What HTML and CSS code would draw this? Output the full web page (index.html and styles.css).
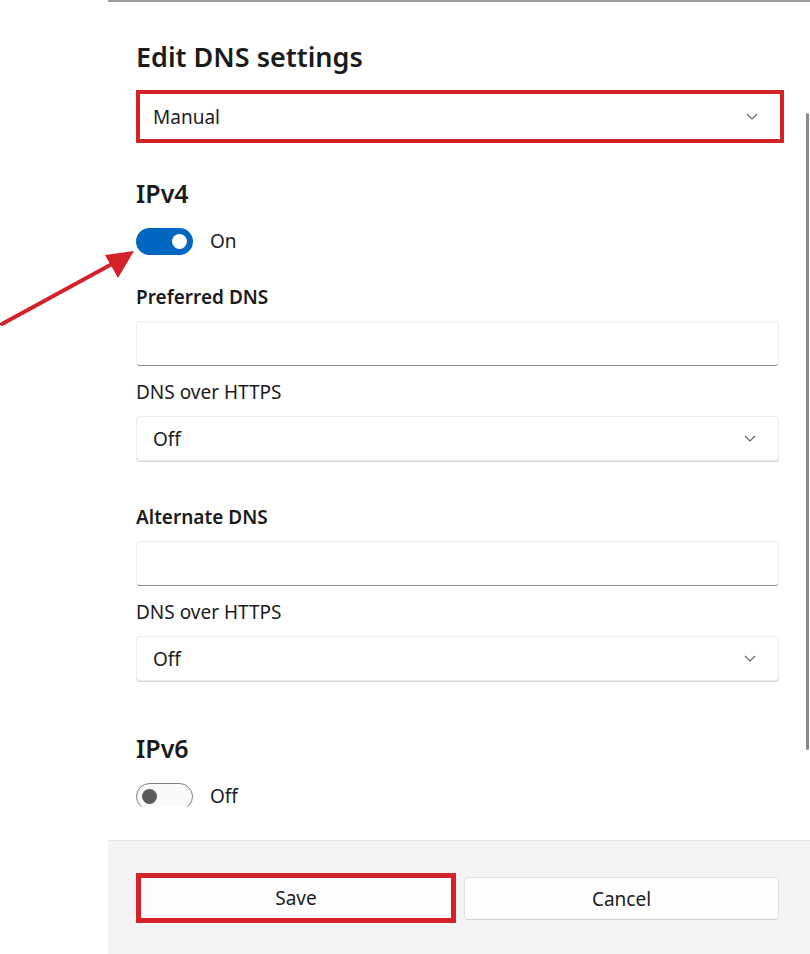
FILE: index.html
```html
<!DOCTYPE html>
<html lang="en">
<head>
    <meta charset="UTF-8">
    <meta name="viewport" content="width=device-width, initial-scale=1.0">
    <title>Edit DNS settings</title>
    <link rel="stylesheet" href="styles.css">
</head>
<body>
    <!-- Annotation arrow pointing at the IPv4 toggle -->
    <svg class="arrow" width="140" height="90" viewBox="0 0 140 90">
        <line x1="2" y1="84" x2="112" y2="24" stroke="#d3222a" stroke-width="4" stroke-linecap="round"/>
        <polygon points="134,11 105,15 118,38" fill="#d3222a"/>
    </svg>

    <div class="dialog">
        <div class="content">
            <div class="main">
                <h1 class="title">Edit DNS settings</h1>

                <div class="highlight">
                    <div class="select">
                        <span>Manual</span>
                        <svg class="chevron" width="12" height="7" viewBox="0 0 12 7"><path d="M1 1l5 5 5-5" fill="none" stroke="#5f5f5f" stroke-width="1.1"/></svg>
                    </div>
                </div>

                <!-- IPv4 -->
                <h2 class="section">IPv4</h2>
                <div class="toggle-row">
                    <span class="toggle on"><span class="knob"></span></span>
                    <span class="toggle-label">On</span>
                </div>

                <div class="field">
                    <div class="label strong">Preferred DNS</div>
                    <div class="textbox"></div>
                </div>
                <div class="field">
                    <div class="label">DNS over HTTPS</div>
                    <div class="select">
                        <span>Off</span>
                        <svg class="chevron" width="12" height="7" viewBox="0 0 12 7"><path d="M1 1l5 5 5-5" fill="none" stroke="#5f5f5f" stroke-width="1.1"/></svg>
                    </div>
                </div>

                <div class="field spaced">
                    <div class="label strong">Alternate DNS</div>
                    <div class="textbox"></div>
                </div>
                <div class="field">
                    <div class="label">DNS over HTTPS</div>
                    <div class="select">
                        <span>Off</span>
                        <svg class="chevron" width="12" height="7" viewBox="0 0 12 7"><path d="M1 1l5 5 5-5" fill="none" stroke="#5f5f5f" stroke-width="1.1"/></svg>
                    </div>
                </div>

                <!-- IPv6 (scrolled, bottom edge cut by the pane) -->
                <h2 class="section section-v6">IPv6</h2>
                <div class="toggle-row">
                    <span class="toggle off"><span class="knob"></span></span>
                    <span class="toggle-label">Off</span>
                </div>
            </div>
            <div class="scrollbar"><div class="thumb"></div></div>
        </div>

        <div class="footer">
            <div class="btn-frame">
                <button class="btn save">Save</button>
            </div>
            <button class="btn cancel">Cancel</button>
        </div>
    </div>
</body>
</html>
```

FILE: styles.css
```css
/* Page */
body {
    margin: 0;
    background: #fff;
    font-family: 'Noto Sans', 'Open Sans', sans-serif;
    color: #1b1b1b;
}

.arrow {
    position: absolute;
    left: 0;
    top: 240px;
}

/* Dialog shell */
.dialog {
    margin-left: 108px;
    width: 702px;
    height: 954px;
    border-top: 2px solid #9c9c9c;
    box-sizing: border-box;
    display: flex;
    flex-direction: column;
}

.content {
    display: flex;
    height: 838px;
}

.main {
    flex: 1;
    padding: 0 27px 0 28px;
}

.scrollbar {
    width: 4px;
    padding-top: 111px;
}

.thumb {
    width: 3px;
    height: 637px;
    background: #8a8a8a;
    border-radius: 2px;
}

/* Headings */
.title {
    margin: 38px 0 0;
    font-size: 27px;
    line-height: 34px;
    font-weight: 600;
}

.section {
    margin: 34px 0 0;
    font-size: 25px;
    line-height: 32px;
    font-weight: 600;
}

.section-v6 {
    margin-top: 51px;
}

/* Red highlight frame */
.highlight {
    margin: 16px -5px 0 0;
    border: 4px solid #d3222a;
}

.highlight .select {
    border: none;
    border-radius: 0;
    box-shadow: none;
    padding-left: 13px;
}

/* Form controls */
.select, .textbox {
    height: 45px;
    box-sizing: border-box;
    border: 1px solid #ececec;
    border-radius: 4px;
    background: #fff;
}

.select {
    display: flex;
    align-items: center;
    justify-content: space-between;
    padding: 0 22px 0 16px;
    font-size: 19px;
    box-shadow: 0 1px 0 #d6d6d6;
}

.textbox {
    border-bottom: 1px solid #8c8c8c;
}

.chevron {
    display: block;
}

.field {
    margin-top: 31px;
}

.field + .field {
    margin-top: 15px;
}

.field + .field.spaced {
    margin-top: 45px;
}

.label {
    font-size: 19px;
    line-height: 22px;
    margin-bottom: 13px;
}

.label.strong {
    font-weight: 600;
}

/* Toggle switches */
.toggle-row {
    display: flex;
    align-items: center;
    gap: 17px;
    margin-top: 18px;
    height: 28px;
}

.toggle {
    width: 57px;
    height: 27px;
    box-sizing: border-box;
    border-radius: 14px;
    display: flex;
    align-items: center;
}

.toggle.on {
    background: #0067c0;
    justify-content: flex-end;
    padding-right: 6px;
}

.toggle.off {
    border: 1.5px solid #7a7a7a;
    background: #fafafa;
    padding-left: 5px;
    clip-path: inset(-2px -2px 3px -2px);
}

.knob {
    width: 15px;
    height: 15px;
    border-radius: 50%;
}

.toggle.on .knob {
    background: #fff;
}

.toggle.off .knob {
    background: #5c5c5c;
}

.toggle-label {
    font-size: 19px;
    line-height: 22px;
}

/* Footer */
.footer {
    flex: 1;
    background: #f3f3f3;
    border-top: 1px solid #e6e6e6;
    display: flex;
    align-items: flex-start;
    gap: 8px;
    padding: 32px 0 0 28px;
}

.btn {
    font-family: inherit;
    font-size: 19px;
    color: #1b1b1b;
    background: #fdfdfd;
    border: 1px solid #e2e2e2;
    border-bottom-color: #cfcfcf;
    border-radius: 4px;
    height: 43px;
}

.btn-frame {
    border: 5px solid #d3222a;
}

.save {
    display: block;
    width: 310px;
    height: 40px;
    border: none;
    border-radius: 0;
}

.cancel {
    width: 315px;
    margin-top: 4px;
}
```
